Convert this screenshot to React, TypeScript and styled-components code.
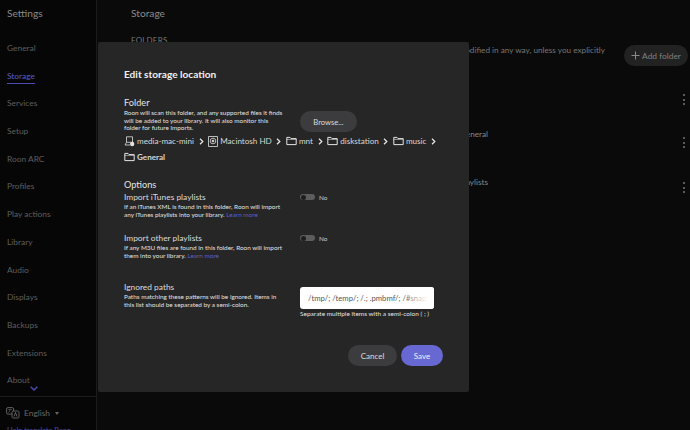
import React from 'react';
import styled, { createGlobalStyle } from 'styled-components';

const Global = createGlobalStyle`
  html, body { margin: 0; padding: 0; background: #0a0a0a; }
  body { font-family: 'Lato', 'Liberation Sans', sans-serif; }
`;

const Page = styled.div`
  position: relative;
  width: 690px;
  height: 430px;
  overflow: hidden;
  display: flex;
  background: #0a0a0a;
`;

// 왼쪽 설정 메뉴
const Sidebar = styled.aside`
  width: 96px;
  height: 430px;
  flex: none;
  background: #060606;
  border-right: 1px solid #1c1c1c;
  display: flex;
  flex-direction: column;
`;

const SideTitle = styled.div`
  font-size: 10.2px;
  color: #8a8a8a;
  padding: 6px 0 0 7px;
  height: 29px;
  line-height: 14px;
`;

const NavList = styled.nav`
  display: flex;
  flex-direction: column;
  height: 361px;
  position: relative;
`;

const NavItem = styled.div<{ $active?: boolean }>`
  height: 27.7px;
  flex: none;
  padding-left: 7px;
  font-size: 8.4px;
  line-height: 27.7px;
  color: ${p => (p.$active ? '#5a5cc0' : '#5e5e5e')};

  span {
    display: inline-block;
    line-height: 11px;
    padding-bottom: 1px;
    border-bottom: ${p => (p.$active ? '1px solid #4a4cb0' : '1px solid transparent')};
  }
`;

const MoreChevron = styled.svg`
  position: absolute;
  left: 30px;
  bottom: 5px;
`;

const SideFooter = styled.div`
  border-top: 1px solid #1c1c1c;
  margin-top: auto;
  height: 33px;
  padding-left: 6px;
`;

const Lang = styled.div`
  display: flex;
  align-items: center;
  gap: 4px;
  height: 26px;
  margin-top: 3px;
  font-size: 8.4px;
  color: #666;
`;

const Translate = styled.div`
  font-size: 7.4px;
  color: #4a4cb0;
  line-height: 9px;
  padding-left: 1px;
`;

const Caret = styled.i`
  width: 0;
  height: 0;
  margin-left: 1px;
  border-left: 2.5px solid transparent;
  border-right: 2.5px solid transparent;
  border-top: 3px solid #666;
`;

// 모달 뒤의 본문
const Main = styled.main`
  flex: 1;
  padding: 6px 2px 0 34px;
  min-width: 0;
`;

const MainTitle = styled.div`
  font-size: 10.2px;
  line-height: 14px;
  color: #8a8a8a;
  height: 21px;
`;

const FoldersHead = styled.div`
  font-size: 8px;
  line-height: 11px;
  margin-top: 8px;
  color: #777;
  letter-spacing: 0.2px;
`;

const IntroRow = styled.div`
  display: flex;
  justify-content: flex-end;
  align-items: flex-start;
  gap: 19px;
  margin-top: -1px;
  height: 36px;
`;

const IntroText = styled.div`
  font-size: 8.2px;
  line-height: 12px;
  color: #777;
  margin-top: -1px;
`;

const AddFolder = styled.div`
  width: 64px;
  height: 21px;
  border-radius: 11px;
  background: #222;
  color: #808080;
  font-size: 8.4px;
  display: flex;
  align-items: center;
  justify-content: center;
  gap: 2px;
`;

const FolderRow = styled.div<{ $h: number }>`
  display: flex;
  justify-content: space-between;
  align-items: flex-start;
  height: ${p => p.$h}px;
  padding-right: 3px;
  font-size: 8.2px;
  line-height: 12px;
  color: #888;
`;

const RowLabel = styled.div`
  width: 357px;
  text-align: right;
  padding-top: 9px;
`;

const Dots = styled.div<{ $top: number }>`
  display: flex;
  flex-direction: column;
  gap: 2.5px;
  margin-top: ${p => p.$top}px;

  i {
    width: 2px;
    height: 2px;
    border-radius: 50%;
    background: #777;
  }
`;

// 저장소 위치 편집 모달
const Modal = styled.section`
  position: absolute;
  left: 98px;
  top: 42px;
  width: 371px;
  height: 350px;
  box-sizing: border-box;
  background: #262626;
  border-radius: 2px;
  padding: 25px 26px 0 26px;
  color: #eee;
  display: flex;
  flex-direction: column;
`;

const ModalTitle = styled.h2`
  margin: 0;
  font-size: 10.1px;
  line-height: 14px;
  font-weight: 700;
  color: #f0f0f0;
`;

const Row = styled.div<{ $h?: number; $mt?: number }>`
  display: grid;
  grid-template-columns: 176px 1fr;
  margin-top: ${p => p.$mt ?? 0}px;
  height: ${p => (p.$h ? `${p.$h}px` : 'auto')};
`;

const SectionTitle = styled.div<{ $mt?: number }>`
  font-size: 9.2px;
  line-height: 13px;
  margin-top: ${p => p.$mt ?? 0}px;
  margin-bottom: ${p => (p.$mt ? 1 : 0)}px;
  color: #e4e4e4;
`;

const ItemTitle = styled.div`
  font-size: 8.4px;
  line-height: 11px;
  color: #dcdcdc;
`;

const Desc = styled.div`
  font-size: 6.4px;
  line-height: 7.6px;
  color: #e2e2e2;
  width: 160px;
`;

const LearnMore = styled.span`
  color: #5c5ecb;
`;

const Browse = styled.div`
  width: 57px;
  height: 21px;
  margin-top: 15px;
  border-radius: 11px;
  background: #3c3c3e;
  color: #ddd;
  font-size: 7.6px;
  display: flex;
  align-items: center;
  justify-content: center;
`;

const Crumbs = styled.div`
  display: flex;
  flex-wrap: wrap;
  align-items: center;
  column-gap: 4.6px;
  row-gap: 4px;
  margin-top: 3px;
  width: 320px;
  font-size: 8.1px;
  color: #d8d8d8;
`;

const Crumb = styled.div<{ $bold?: boolean }>`
  display: flex;
  align-items: center;
  gap: 2px;
  height: 12px;
  font-weight: ${p => (p.$bold ? 700 : 400)};
`;

const ToggleRow = styled.div`
  display: flex;
  align-items: center;
  gap: 4px;
  font-size: 6.4px;
  color: #ccc;
  height: 10px;
`;

const Toggle = styled.div`
  width: 15px;
  height: 6px;
  box-sizing: border-box;
  padding: 0 1px;
  border-radius: 3px;
  background: #5c5c5c;
  display: flex;
  align-items: center;

  i {
    width: 5px;
    height: 5px;
    border-radius: 50%;
    background: #1e1e1e;
  }
`;

const PathColumn = styled.div`
  padding-top: 5px;
`;

const PathInput = styled.div`
  width: 134px;
  height: 22px;
  box-sizing: border-box;
  border-radius: 3px;
  background: #fff;
  color: #555;
  padding: 0 8px;
  font-size: 7.7px;
  line-height: 22px;
  white-space: nowrap;
  overflow: hidden;
  position: relative;

  &::after {
    content: '';
    position: absolute;
    right: 0;
    top: 0;
    width: 32px;
    height: 100%;
    background: linear-gradient(90deg, rgba(255, 255, 255, 0), #fff 80%);
  }
`;

const Hint = styled.div`
  font-size: 6.5px;
  line-height: 8px;
  margin-top: 1px;
  color: #e2e2e2;
  white-space: nowrap;
`;

const Actions = styled.div`
  display: flex;
  justify-content: flex-end;
  gap: 4px;
  margin-top: 27px;
`;

const ActionButton = styled.div<{ $primary?: boolean }>`
  width: ${p => (p.$primary ? 42 : 49)}px;
  height: 21px;
  border-radius: 11px;
  background: ${p => (p.$primary ? '#6768d2' : '#3c3c3e')};
  color: ${p => (p.$primary ? '#f0f0ff' : '#ddd')};
  font-size: 8px;
  display: flex;
  align-items: center;
  justify-content: center;
`;

const NAV = ['General', 'Storage', 'Services', 'Setup', 'Roon ARC', 'Profiles', 'Play actions', 'Library', 'Audio', 'Displays', 'Backups', 'Extensions', 'About'];

const FolderIcon = () => (
  <svg width="11" height="10" viewBox="0 0 11 10" fill="none" stroke="#e4e4e4" strokeWidth="1">
    <path d="M.8 8.6V1.4h3.2l1 1.2h5.2v6z" strokeLinejoin="round" />
    <path d="M.8 3.4h9.4" strokeWidth=".6" />
  </svg>
);

const Chevron = () => (
  <svg width="5" height="7" viewBox="0 0 5 7" fill="none" stroke="#e8e8e8" strokeWidth="1.2">
    <path d="M1 .8 3.8 3.5 1 6.2" />
  </svg>
);

const ComputerIcon = () => (
  <svg width="11" height="11" viewBox="0 0 11 11" fill="none" stroke="#e0e0e0" strokeWidth=".8">
    <path d="M2.5.8h6v5.5h-6zM2.5 6.3 1 9h5" />
    <circle cx="8.2" cy="8" r="2.2" fill="#e0e0e0" stroke="none" />
  </svg>
);

const DriveIcon = () => (
  <svg width="10" height="11" viewBox="0 0 10 11" fill="none" stroke="#e0e0e0" strokeWidth=".8">
    <rect x=".6" y=".6" width="8.8" height="9.8" />
    <circle cx="5" cy="5" r="2.8" />
    <circle cx="5" cy="5" r=".9" fill="#e0e0e0" />
  </svg>
);

const LanguageIcon = () => (
  <svg width="14" height="12" viewBox="0 0 14 12" fill="none" stroke="#777" strokeWidth=".8">
    <rect x=".6" y=".6" width="7" height="6.5" rx="1.4" />
    <rect x="6" y="4" width="7" height="7" rx="1.4" fill="#060606" />
    <path d="M8 9.5 9.5 5.5 11 9.5" />
    <path d="M2.3 2.4h3.6M4 2.4c0 1.6-.6 2.6-1.6 3.1" strokeWidth=".6" />
  </svg>
);

const PlusIcon = () => (
  <svg width="9" height="9" viewBox="0 0 9 9" stroke="#8a8a8a" strokeWidth="1">
    <path d="M4.5.5v8M.5 4.5h8" />
  </svg>
);

function App() {
  return (
    <Page>
      <Global />
      <Sidebar>
        <SideTitle>Settings</SideTitle>
        <NavList>
          {NAV.map(n => (
            <NavItem key={n} $active={n === 'Storage'}>
              <span>{n}</span>
            </NavItem>
          ))}
          <MoreChevron width="8" height="5" viewBox="0 0 8 5" fill="none" stroke="#4a4cb0" strokeWidth="1.4">
            <path d="M.7.7 4 4 7.3.7" />
          </MoreChevron>
        </NavList>
        <SideFooter>
          <Lang>
            <LanguageIcon />
            English
            <Caret />
          </Lang>
          <Translate>Help translate Roon</Translate>
        </SideFooter>
      </Sidebar>

      <Main>
        <MainTitle>Storage</MainTitle>
        <FoldersHead>FOLDERS</FoldersHead>
        <IntroRow>
          <IntroText>Your files will not be modified in any way, unless you explicitly</IntroText>
          <AddFolder>
            <PlusIcon />
            Add folder
          </AddFolder>
        </IntroRow>
        <FolderRow $h={38}>
          <span />
          <Dots $top={13}><i /><i /><i /></Dots>
        </FolderRow>
        <FolderRow $h={48}>
          <RowLabel>/mnt/diskstation/music/General</RowLabel>
          <Dots $top={18}><i /><i /><i /></Dots>
        </FolderRow>
        <FolderRow $h={42}>
          <RowLabel>iTunes playlists</RowLabel>
          <Dots $top={15}><i /><i /><i /></Dots>
        </FolderRow>
      </Main>

      <Modal>
        <ModalTitle>Edit storage location</ModalTitle>
        <Row $mt={15}>
          <div>
            <SectionTitle>Folder</SectionTitle>
            <Desc>Roon will scan this folder, and any supported files it finds will be added to your library. It will also monitor this folder for future imports.</Desc>
          </div>
          <Browse>Browse...</Browse>
        </Row>
        <Crumbs>
          <Crumb><ComputerIcon />media-mac-mini</Crumb>
          <Chevron />
          <Crumb><DriveIcon />Macintosh HD</Crumb>
          <Chevron />
          <Crumb><FolderIcon />mnt</Crumb>
          <Chevron />
          <Crumb><FolderIcon />diskstation</Crumb>
          <Chevron />
          <Crumb><FolderIcon />music</Crumb>
          <Chevron />
          <Crumb $bold><FolderIcon />General</Crumb>
        </Crumbs>
        <SectionTitle $mt={15}>Options</SectionTitle>
        <Row $h={41}>
          <div>
            <ItemTitle>Import iTunes playlists</ItemTitle>
            <Desc>If an iTunes XML is found in this folder, Roon will import any iTunes playlists into your library. <LearnMore>Learn more</LearnMore></Desc>
          </div>
          <ToggleRow><Toggle><i /></Toggle>No</ToggleRow>
        </Row>
        <Row $h={49}>
          <div>
            <ItemTitle>Import other playlists</ItemTitle>
            <Desc>If any M3U files are found in this folder, Roon will import them into your library. <LearnMore>Learn more</LearnMore></Desc>
          </div>
          <ToggleRow><Toggle><i /></Toggle>No</ToggleRow>
        </Row>
        <Row>
          <div>
            <ItemTitle>Ignored paths</ItemTitle>
            <Desc>Paths matching these patterns will be ignored. Items in this list should be separated by a semi-colon.</Desc>
          </div>
          <PathColumn>
            <PathInput>/tmp/; /temp/; /.; .pmbmf/; /#snapshot/</PathInput>
            <Hint>Separate multiple items with a semi-colon ( ; )</Hint>
          </PathColumn>
        </Row>
        <Actions>
          <ActionButton>Cancel</ActionButton>
          <ActionButton $primary>Save</ActionButton>
        </Actions>
      </Modal>
    </Page>
  );
}

export default App;
